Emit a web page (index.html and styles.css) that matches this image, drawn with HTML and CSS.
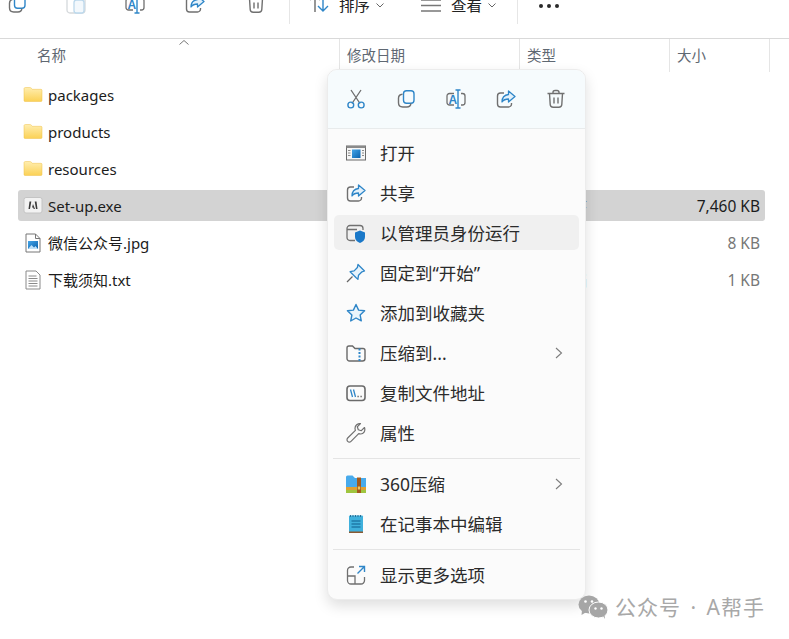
FILE: index.html
```html
<!DOCTYPE html>
<html lang="zh">
<head>
<meta charset="utf-8">
<title>文件资源管理器</title>
<link rel="stylesheet" href="styles.css">
</head>
<body>
<svg class="defs" width="0" height="0" aria-hidden="true">
  <defs>
    <linearGradient id="fold" x1="0" y1="0" x2="0" y2="1"><stop offset="0" stop-color="#ffeeb0"/><stop offset="1" stop-color="#fbd155"/></linearGradient>
    <linearGradient id="blu" x1="0" y1="0" x2="1" y2="1"><stop offset="0" stop-color="#45a5e8"/><stop offset="1" stop-color="#0b62ad"/></linearGradient>
    <symbol id="i-folder" viewBox="0 0 20 20">
      <path d="M1 3.800C1 3 1.600 2.500 2.500 2.500h4.300c.6 0 1 .2 1.400.6L9.500 4.300H18c.6 0 1 .4 1 1v10.200c0 .6-.4 1-1 1H2c-.6 0-1-.4-1-1z" fill="url(#fold)" stroke="#eec14a" stroke-width=".5"/>
    </symbol>
    <symbol id="i-copy" viewBox="0 0 20 20">
      <rect x="7.500" y="1.800" width="10.500" height="12.500" rx="3" fill="none" stroke="#2f86c8" stroke-width="1.400"/>
      <path d="M6.500 5.200C4 5.400 2.500 7 2.500 9.200v4.600c0 2.600 1.600 4.200 4.200 4.200h4.200c2.200 0 3.700-1.100 4-3.400" fill="none" stroke="#707070" stroke-width="1.400"/>
    </symbol>
    <symbol id="i-rename" viewBox="0 0 20 20">
      <path d="M8 4.500H3.500A2.500 2.500 0 0 0 1 7v6.500A2.500 2.500 0 0 0 3.500 16H8M15 4.500h1.500A2.500 2.500 0 0 1 19 7v6.500a2.500 2.500 0 0 1-2.500 2.500H15" fill="none" stroke="#707070" stroke-width="1.300"/>
      <path d="M12 1v18M9.500 1h5M9.500 19h5" fill="none" stroke="#2f86c8" stroke-width="1.400"/>
      <text x="2.500" y="14.500" class="svg-a">A</text>
    </symbol>
    <symbol id="i-share" viewBox="0 0 20 20">
      <path d="M8 4H4.500A3 3 0 0 0 1.500 7v8a3 3 0 0 0 3 3h8a3 3 0 0 0 3-3v-1" fill="none" stroke="#707070" stroke-width="1.400"/>
      <path d="M12.500 2l6.500 5.500-6.500 5.500V10c-3 0-5 .8-6.500 3 0-4.500 2.500-7 6.500-7.500z" fill="#e3f1fb" stroke="#2f86c8" stroke-width="1.300" stroke-linejoin="round"/>
    </symbol>
    <symbol id="i-trash" viewBox="0 0 20 20">
      <path d="M1.500 4.500h17M7 4.500V3.300C7 2 8 1.500 9 1.500h2c1 0 2 .5 2 1.800v1.200M3.500 4.500l.7 11c.1 1.700 1.200 2.800 3 2.800h5.600c1.800 0 2.900-1.100 3-2.800l.7-11M8 8.500v6M12 8.500v6" fill="none" stroke="#707070" stroke-width="1.400"/>
    </symbol>
  </defs>
</svg>

<div class="page">
  <div class="toolbar">
    <svg class="tb-icon tb-copy"><use href="#i-copy"/></svg>
    <svg class="tb-icon tb-paste" viewBox="0 0 20 20"><rect x="1" y="2" width="18" height="17" rx="3" fill="none" stroke="#d5d9dc" stroke-width="1.300"/><rect x="8" y="6" width="10" height="13" rx="2.500" fill="#f3f8fc" stroke="#bcd8ec" stroke-width="1.300"/></svg>
    <svg class="tb-icon tb-rename"><use href="#i-rename"/></svg>
    <svg class="tb-icon tb-share"><use href="#i-share"/></svg>
    <svg class="tb-icon tb-trash"><use href="#i-trash"/></svg>
    <span class="tb-sep tb-sep-a"></span>
    <svg class="tb-icon tb-sort" viewBox="0 0 20 20"><path d="M6 19V2M1 7l5-5 5 5" fill="none" stroke="#6b6b6b" stroke-width="1.400"/><path d="M14 1v17M9 13l5 5 5-5" fill="none" stroke="#2f86c8" stroke-width="1.400"/></svg>
    <span class="tb-label tb-label-sort">排序</span>
    <svg class="tb-chev" viewBox="0 0 8 5"><path d="M.5.500 4 4 7.500.500" fill="none" stroke="#666"/></svg>
    <svg class="tb-icon tb-list" viewBox="0 0 20 20"><path d="M0 6h20M0 11.500h20M0 17h20" fill="none" stroke="#777" stroke-width="1.300"/></svg>
    <span class="tb-label tb-label-view">查看</span>
    <svg class="tb-chev" viewBox="0 0 8 5"><path d="M.5.500 4 4 7.500.500" fill="none" stroke="#666"/></svg>
    <span class="tb-sep tb-sep-b"></span>
    <span class="tb-dots"><i></i><i></i><i></i></span>
  </div>

  <div class="header">
    <div class="hcol hcol-name">名称<svg class="caret" viewBox="0 0 10 5"><path d="M.5 4.500 5 .5l4.500 4" fill="none" stroke="#777"/></svg></div>
    <div class="hcol hcol-date">修改日期</div>
    <div class="hcol hcol-type">类型</div>
    <div class="hcol hcol-size">大小</div>
  </div>

  <div class="rows">
    <div class="row">
      <div class="name"><svg class="ficon"><use href="#i-folder"/></svg><span>packages</span></div>
    </div>
    <div class="row">
      <div class="name"><svg class="ficon"><use href="#i-folder"/></svg><span>products</span></div>
    </div>
    <div class="row">
      <div class="name"><svg class="ficon"><use href="#i-folder"/></svg><span>resources</span></div>
    </div>
    <div class="row row-selected">
      <div class="name"><svg class="ficon" viewBox="0 0 20 20"><rect x="1" y="1.500" width="18" height="15.500" rx="2" fill="#f2f2f2" stroke="#c4c4c4"/><path d="M8.300 5.500H6.500L5.500 13H7zM11.700 5.500h1.800l1 7.500H13zM10 8l2 5h-1.300l-.5-1.500H9z" fill="#3a3a3a"/></svg><span>Set-up.exe</span></div>
      <div class="type">应用程序</div>
      <div class="size">7,460 KB</div>
    </div>
    <div class="row">
      <div class="name"><svg class="ficon" viewBox="0 0 20 20"><path d="M3 1h9.500L17 5.500V19H3zM12.500 1v4.500H17" fill="#fff" stroke="#777"/><rect x="5" y="8" width="10" height="8" fill="url(#blu)"/><path d="M5 16l3.500-4 2.500 2.500 1.500-1.500 2.500 3z" fill="#bfe0f7"/></svg><span>微信公众号.jpg</span></div>
      <div class="type">JPG 文件</div>
      <div class="size size-dim">8 KB</div>
    </div>
    <div class="row">
      <div class="name"><svg class="ficon" viewBox="0 0 20 20"><path d="M3 1h10l4 4v14H3z" fill="#fff" stroke="#8a8a8a"/><path d="M5.500 6h8M5.500 8.500h9M5.500 11h9M5.500 13.500h9M5.500 16h9" stroke="#8a8a8a"/></svg><span>下载须知.txt</span></div>
      <div class="type">文本文档</div>
      <div class="size size-dim">1 KB</div>
    </div>
  </div>

  <div class="menu">
    <div class="menu-strip">
      <div class="strip-btn"><svg class="micon" viewBox="0 0 20 20"><path d="M5 1l9 13.500M15 1L6 14.500" fill="none" stroke="#6d6d6d" stroke-width="1.300"/><circle cx="4.800" cy="16" r="2.900" fill="none" stroke="#2f86c8" stroke-width="1.400"/><circle cx="15.200" cy="16" r="2.900" fill="none" stroke="#2f86c8" stroke-width="1.400"/></svg></div>
      <div class="strip-btn"><svg class="micon"><use href="#i-copy"/></svg></div>
      <div class="strip-btn"><svg class="micon"><use href="#i-rename"/></svg></div>
      <div class="strip-btn"><svg class="micon"><use href="#i-share"/></svg></div>
      <div class="strip-btn"><svg class="micon"><use href="#i-trash"/></svg></div>
    </div>
    <div class="menu-list">
      <div class="item"><svg class="micon" viewBox="0 0 20 20"><rect x=".5" y="3" width="19" height="14" fill="#f6f6f6" stroke="#6b6b6b"/><rect x=".5" y="3" width="19" height="2" fill="#8a8a8a"/><rect x="6" y="6.500" width="8.500" height="8.500" fill="url(#blu)"/><path d="M2 7.500h2.500M2 10h2.500M2 12.500h2.500M16 7.500h2M16 10h2M16 12.500h2" stroke="#8a8a8a"/></svg><span>打开</span></div>
      <div class="item"><svg class="micon"><use href="#i-share"/></svg><span>共享</span></div>
      <div class="item item-hover"><svg class="micon" viewBox="0 0 20 20"><path d="M9 17.500H4a3 3 0 0 1-3-3v-9a3 3 0 0 1 3-3h10a3 3 0 0 1 3 3v1.500M1 6.500h10" fill="none" stroke="#707070" stroke-width="1.300"/><path d="M14 7.500l5 2v4.500c0 3-2.200 4.800-5 6-2.800-1.200-5-3-5-6V9.500z" fill="#1a78c8"/></svg><span>以管理员身份运行</span></div>
      <div class="item"><svg class="micon" viewBox="0 0 20 20"><path d="M12 1.500l6.500 6.500-2.500.8-3.500 3.500-.6 4-2-1.800-5.800-5.800 4-.8 3.300-3.400z" fill="#e6f3fc" stroke="#2f86c8" stroke-width="1.300" stroke-linejoin="round"/><path d="M6.500 13.500 1 19" fill="none" stroke="#666" stroke-width="1.300"/></svg><span>固定到“开始”</span></div>
      <div class="item"><svg class="micon" viewBox="0 0 20 20"><path d="M10 1.500l2.600 5.600 6 .7-4.500 4.100 1.200 6L10 15l-5.300 3 1.200-6L1.400 7.800l6-.7z" fill="#eaf5fc" stroke="#2f86c8" stroke-width="1.400" stroke-linejoin="round"/></svg><span>添加到收藏夹</span></div>
      <div class="item"><svg class="micon" viewBox="0 0 20 20"><path d="M1 5a2 2 0 0 1 2-2h3.500l2.500 2.500h8a2 2 0 0 1 2 2V15.500a2.500 2.500 0 0 1-2.500 2.500h-13A2.500 2.500 0 0 1 1 15.500z" fill="none" stroke="#6a6a6a" stroke-width="1.400"/><path d="M13.500 5.500v12.500" stroke="#2f86c8" stroke-width="2" stroke-dasharray="2 1.500"/></svg><span>压缩到...</span><svg class="arrow" viewBox="0 0 8 12"><path d="M1 1l5.500 5L1 11" fill="none" stroke="#7c7c7c" stroke-width="1.100"/></svg></div>
      <div class="item"><svg class="micon" viewBox="0 0 20 20"><rect x="1" y="3" width="18" height="14.500" rx="3" fill="none" stroke="#6a6a6a" stroke-width="1.600"/><path d="M4.500 6.500l2 7.500M7.500 6.500l2 7.500" stroke="#2f86c8" stroke-width="1.300"/><path d="M11.500 13.500h1.200M14.500 13.500h1.200" stroke="#555" stroke-width="1.300"/></svg><span>复制文件地址</span></div>
      <div class="item"><svg class="micon" viewBox="0 0 20 20"><path d="M18.500 4.500l-3.200 3.200-3-1-1-3L14.500.6C11.500.2 9 2.500 9 5.300c0 .8.200 1.500.4 2L1.700 15a2.300 2.300 0 0 0 3.300 3.300l7.700-7.700c.6.200 1.300.4 2 .4 2.800 0 5-2.800 3.800-6.500z" fill="none" stroke="#707070" stroke-width="1.200" stroke-linejoin="round"/></svg><span>属性</span></div>
      <div class="sep"></div>
      <div class="item"><svg class="micon" viewBox="0 0 20 20"><path d="M0 3a1.500 1.500 0 0 1 1.500-1.500h5L9 4h11v9H0z" fill="#48aaeb"/><path d="M0 13h20v3H0z" fill="#e0a032"/><path d="M0 16h20v3H0z" fill="#9fc53f"/><path d="M11 3.500h4V19h-4z" fill="#a35a1c"/><rect x="11.800" y="12.500" width="2.400" height="3" fill="#f1c85e"/></svg><span>360压缩</span><svg class="arrow" viewBox="0 0 8 12"><path d="M1 1l5.500 5L1 11" fill="none" stroke="#7c7c7c" stroke-width="1.100"/></svg></div>
      <div class="item"><svg class="micon" viewBox="0 0 20 20"><rect x="3" y="1.500" width="14" height="17" rx="1" fill="#3fb0dc"/><path d="M3 17.500h14v1.500H3z" fill="#8a5a32"/><path d="M5.500 7h9M5.500 10h9M5.500 13h9" stroke="#0f5f8e" stroke-width="1.100"/><path d="M4.500 1v2M7 1v2M9.500 1v2M12 1v2M14.500 1v2" stroke="#2a6f96"/></svg><span>在记事本中编辑</span></div>
      <div class="sep"></div>
      <div class="item"><svg class="micon" viewBox="0 0 20 20"><path d="M8 2H5a3.500 3.500 0 0 0-3.500 3.500v10A3.500 3.500 0 0 0 5 19h10a3.500 3.500 0 0 0 3.500-3.500V12M1.500 11H9v8" fill="none" stroke="#707070" stroke-width="1.300"/><path d="M11.500 8.500 18 2M13 1.500h5.500V7" fill="none" stroke="#2f86c8" stroke-width="1.400"/></svg><span>显示更多选项</span></div>
    </div>
  </div>

  <div class="mark">
    <svg class="mark-icon" viewBox="0 0 30 24"><ellipse cx="11" cy="9.500" rx="10.500" ry="9" fill="#a6a6a6"/><path d="M4 15l-.5 5 5-3z" fill="#a6a6a6"/><ellipse cx="20.500" cy="15" rx="9.500" ry="8" fill="#a6a6a6" stroke="#fff"/><path d="M25 21l2 3-.5-4z" fill="#a6a6a6"/><circle cx="7.500" cy="6.500" r="1.300" fill="#fff"/><circle cx="14" cy="6.500" r="1.300" fill="#fff"/><circle cx="17.500" cy="13.500" r="1.200" fill="#fff"/><circle cx="23.500" cy="13.500" r="1.200" fill="#fff"/></svg>
    <span>公众号 · A帮手</span>
  </div>
</div>
</body>
</html>
```

FILE: styles.css
```css
* { box-sizing: border-box; }
html, body { margin: 0; padding: 0; background: #fff; }
body { font-family: "Noto Sans", "Noto Sans CJK SC", sans-serif; color: #1c1c1c; }
.defs { position: absolute; }
.svg-a { font: 600 12px "Liberation Sans", sans-serif; fill: #2f86c8; }
.page { position: relative; width: 789px; height: 639px; overflow: hidden; background: #fff; }

/* top command bar, clipped by the window crop */
.toolbar { display: flex; align-items: flex-start; height: 39px; padding-left: 7px; border-bottom: 1px solid #d9d9d9; overflow: hidden; }
.tb-icon { flex: none; width: 20px; height: 20px; margin-top: -6px; }
.tb-paste { margin-left: 39px; }
.tb-rename { margin-left: 39px; }
.tb-share { margin-left: 40px; }
.tb-trash { margin-left: 41px; }
.tb-sep { flex: none; width: 1px; height: 24px; background: #e6e6e6; }
.tb-sep-a { margin-left: 23px; }
.tb-sort { margin-left: 19px; margin-top: -7px; }
.tb-label { flex: none; font-size: 15.500px; line-height: 20px; margin-top: -5px; color: #222; }
.tb-label-sort { margin-left: 10px; }
.tb-chev { flex: none; width: 8px; height: 5px; margin: 3px 0 0 6px; }
.tb-list { margin-left: 37px; }
.tb-label-view { margin-left: 10px; }
.tb-sep-b { margin-left: 21px; }
.tb-dots { display: flex; gap: 4px; margin: 4px 0 0 21px; }
.tb-dots i { display: block; width: 4px; height: 4px; border-radius: 50%; background: #2a2a2a; }

/* column headers */
.header { display: flex; height: 33px; font-size: 14.500px; color: #5f6872; }
.hcol { position: relative; height: 33px; line-height: 33px; padding-left: 7px; border-right: 1px solid #e5e5e5; }
.hcol-name { width: 340px; padding-left: 37px; }
.hcol-date { width: 180px; }
.hcol-type { width: 150px; }
.hcol-size { width: 100px; }
.caret { position: absolute; left: 179px; top: 1px; width: 10px; height: 5px; }

/* file list */
.rows { display: flex; flex-direction: column; gap: 6px; margin: 7px 24px 0 18px; }
.row { display: grid; grid-template-columns: 509px 150px 88px; align-items: center; height: 31px; padding-top: 2px; font-size: 15px; line-height: 29px; border-radius: 3px; }
.row-selected { background: #d3d3d3; }
.name { display: flex; align-items: center; gap: 5px; padding-left: 5px; }
.ficon { flex: none; width: 20px; height: 20px; margin-top: -2px; }
.type { grid-column: 2; white-space: nowrap; color: #555; }
.size { grid-column: 3; text-align: right; padding-right: 5px; font-size: 15.500px; }
.size-dim { color: #777; }

/* context menu */
.menu { position: absolute; left: 327px; top: 69px; width: 259px; height: 531px; background: #fbfbfb; border: 1px solid #ececec; border-radius: 10px; box-shadow: 0 6px 14px rgba(0, 0, 0, .13); overflow: hidden; }
.menu-strip { display: flex; height: 59px; padding-left: 3px; align-items: center; background: #f6fbfd; border-bottom: 1px solid #e8ebec; }
.strip-btn { display: flex; flex: none; justify-content: center; width: 50px; }
.micon { flex: none; width: 20px; height: 20px; }
.menu-list { display: flex; flex-direction: column; gap: 5px; padding: 6px 6px 0; }
.item { display: flex; flex: none; align-items: center; gap: 14px; height: 35px; padding: 0 16px 0 12px; border-radius: 5px; font-size: 17.500px; color: #2b2b2b; }
.item span { flex: 1; }
.item-hover { background: #f0f0f0; }
.arrow { flex: none; width: 8px; height: 12px; }
.sep { flex: none; height: 1px; margin: 2.500px -1px 2.500px; background: #e4e4e4; }

/* watermark */
.mark { position: absolute; left: 578px; top: 594px; display: flex; align-items: center; gap: 7px; font-size: 21px; line-height: 26px; letter-spacing: 1px; word-spacing: 3px; color: #a8a8a8; white-space: nowrap; }
.mark-icon { flex: none; width: 30px; height: 24px; }
```
